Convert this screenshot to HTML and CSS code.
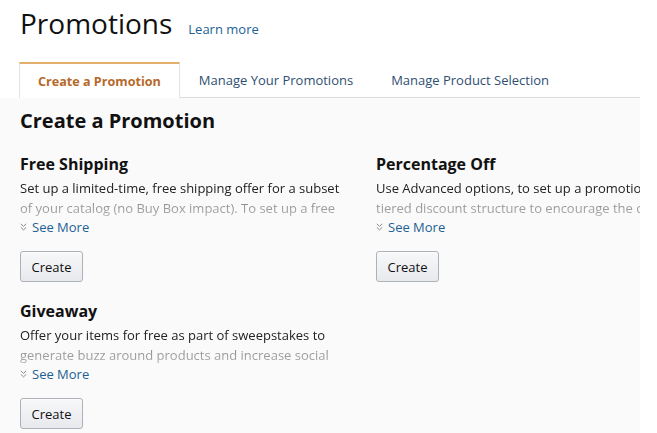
FILE: index.html
```html
<!DOCTYPE html>
<html>
<head>
<meta charset="utf-8">
<link rel="stylesheet" href="styles.css">
</head>
<body>
<div class="page">
  <header class="page-header">
    <h1 class="page-title">Promotions</h1>
    <a class="learn-more" href="#">Learn more</a>
  </header>
  <nav class="tabs">
    <div class="tab tab-active">Create a Promotion</div>
    <div class="tab">Manage Your Promotions</div>
    <div class="tab">Manage Product Selection</div>
    <div class="tab-fill"></div>
  </nav>
  <main class="content">
    <h2 class="section-title">Create a Promotion</h2>
    <div class="cards">
      <section class="card">
        <h3 class="card-title">Free Shipping</h3>
        <p class="card-desc">Set up a limited-time, free shipping offer for a subset of your catalog (no Buy Box impact). To set up a free shipping promotion for your entire catalog, use shipping settings.</p>
        <a class="see-more" href="#"><svg class="chev" width="7" height="8" viewBox="0 0 7 8"><path d="M0.8 0.8 L3.5 3.4 L6.2 0.8 M0.8 4.3 L3.5 6.9 L6.2 4.3" fill="none" stroke="#8a8a8a" stroke-width="1"/></svg>See More</a>
        <button class="btn">Create</button>
      </section>
      <section class="card">
        <h3 class="card-title">Percentage Off</h3>
        <p class="card-desc">Use Advanced options, to set up a promotion with a tiered discount structure to encourage the customer to buy more units.</p>
        <a class="see-more" href="#"><svg class="chev" width="7" height="8" viewBox="0 0 7 8"><path d="M0.8 0.8 L3.5 3.4 L6.2 0.8 M0.8 4.3 L3.5 6.9 L6.2 4.3" fill="none" stroke="#8a8a8a" stroke-width="1"/></svg>See More</a>
        <button class="btn">Create</button>
      </section>
      <section class="card">
        <h3 class="card-title">Giveaway</h3>
        <p class="card-desc">Offer your items for free as part of sweepstakes to generate buzz around products and increase social engagement with your brand.</p>
        <a class="see-more" href="#"><svg class="chev" width="7" height="8" viewBox="0 0 7 8"><path d="M0.8 0.8 L3.5 3.4 L6.2 0.8 M0.8 4.3 L3.5 6.9 L6.2 4.3" fill="none" stroke="#8a8a8a" stroke-width="1"/></svg>See More</a>
        <button class="btn">Create</button>
      </section>
    </div>
  </main>
</div>
</body>
</html>
```
FILE: styles.css
```css
html, body {
  margin: 0;
  padding: 0;
  background: #ffffff;
}
body {
  font-family: "Open Sans", "Noto Sans", sans-serif;
  color: #111111;
}
.page {
  width: 640px;
  height: 433px;
  overflow: hidden;
  background: #fafafa;
}
.page-header {
  display: flex;
  align-items: baseline;
  gap: 16px;
  padding: 6px 0 0 20px;
  height: 55px;
  box-sizing: border-box;
  background: #ffffff;
}
.page-title {
  margin: 0;
  font-size: 28px;
  font-weight: 400;
  color: #111111;
  line-height: 34px;
}
.learn-more {
  font-size: 13px;
  color: #1d5f95;
  text-decoration: none;
}
.tabs {
  display: flex;
  padding: 7px 0 0 19px;
  background: #ffffff;
  height: 43px;
  box-sizing: border-box;
}
.tab {
  height: 36px;
  box-sizing: border-box;
  padding: 0 19px;
  display: flex;
  align-items: center;
  font-size: 13px;
  color: #2f4f73;
  border-bottom: 1px solid #dcdcdc;
}
.tab-active {
  padding: 0 18px;
  font-size: 12.6px;
  color: #b6692a;
  font-weight: 700;
  border: 1px solid #e3e3e3;
  border-top: 2px solid #e2b06c;
  border-bottom: none;
  background: #ffffff;
}
.tab-fill {
  flex: 1;
  border-bottom: 1px solid #dcdcdc;
}
.content {
  padding: 0 0 0 20px;
}
.section-title {
  margin: 0;
  padding-top: 9px;
  font-size: 20px;
  font-weight: 700;
  line-height: 28px;
}
.cards {
  display: grid;
  grid-template-columns: 356px 356px;
  row-gap: 18px;
  padding-top: 18px;
}
.card {
  display: flex;
  flex-direction: column;
  align-items: flex-start;
}
.card-title {
  margin: 0;
  font-size: 16px;
  font-weight: 700;
  line-height: 22px;
}
.card-desc {
  margin: 3px 0 0 0;
  font-size: 13px;
  line-height: 20px;
  height: 38px;
  overflow: hidden;
  color: #222222;
  width: 330px;
  -webkit-mask-image: linear-gradient(to bottom, #000 0%, #000 50%, rgba(0,0,0,0.5) 65%, rgba(0,0,0,0.35) 100%);
  mask-image: linear-gradient(to bottom, #000 0%, #000 50%, rgba(0,0,0,0.5) 65%, rgba(0,0,0,0.35) 100%);
}
.see-more {
  display: flex;
  align-items: center;
  margin-top: 2px;
  font-size: 13px;
  line-height: 18px;
  color: #1d5f95;
  text-decoration: none;
}
.chev {
  display: block;
  margin: 0 5px 0 0;
}
.btn {
  margin-top: 15px;
  width: 63px;
  height: 31px;
  font-family: inherit;
  font-size: 13px;
  color: #111111;
  border: 1px solid #adb1b8;
  border-radius: 3px;
  background: linear-gradient(to bottom, #f7f8fa, #e7e9ec);
  box-shadow: 0 1px 0 rgba(255,255,255,0.6) inset;
  padding: 0;
}
```
